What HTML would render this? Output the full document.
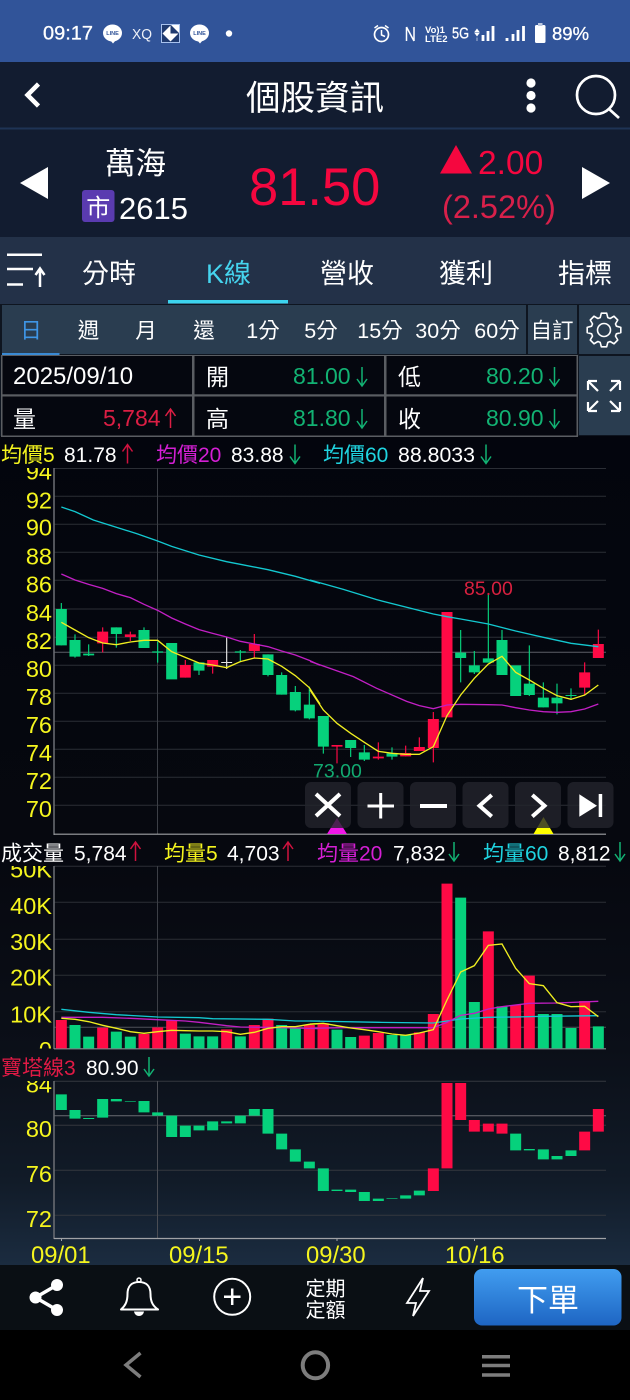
<!DOCTYPE html>
<html><head><meta charset="utf-8"><style>
html,body{margin:0;padding:0;background:#000;width:630px;height:1400px;overflow:hidden}
svg{display:block}
text{font-family:"Liberation Sans","Noto Sans CJK TC",sans-serif;fill:#fff}
.y text{fill:#f5f51e}
.g{fill:#12b273}.r{fill:#f0103f}
</style></head><body>
<svg width="630" height="1400" viewBox="0 0 630 1400" xmlns="http://www.w3.org/2000/svg">
<defs>
<linearGradient id="bg" x1="0" y1="0" x2="0" y2="1"><stop offset="0" stop-color="#03050d"/><stop offset=".5" stop-color="#06080f"/><stop offset=".74" stop-color="#0b0f18"/><stop offset=".9" stop-color="#111b28"/><stop offset="1" stop-color="#1b2c40"/></linearGradient>
<linearGradient id="btn" x1="0" y1="0" x2="0" y2="1"><stop offset="0" stop-color="#419df0"/><stop offset="1" stop-color="#1e65c3"/></linearGradient>
<clipPath id="c1"><rect x="0" y="468" width="54" height="370"/></clipPath>
<clipPath id="c2"><rect x="0" y="866" width="54" height="182.500"/></clipPath>
<clipPath id="c3"><rect x="0" y="1081" width="54" height="157"/></clipPath>
<path id="dn" fill="none" stroke-width="1.500" d="M0 -19V0M-5 -7L0 0L5 -7"/>
<path id="up" fill="none" stroke-width="1.500" d="M0 0V-19M-5 -12L0 -19L5 -12"/>
</defs>

<!-- base -->
<rect width="630" height="1400" fill="#000"/>
<rect width="630" height="62" fill="#315499"/>
<rect y="62" width="630" height="175" fill="#121c30"/>
<rect y="127.500" width="630" height="2" fill="#1e3355"/>
<rect y="237" width="630" height="67" fill="#233148"/>
<rect y="304" width="630" height="132" fill="#0e1520"/>
<rect y="436" width="630" height="829" fill="url(#bg)"/>

<!-- status bar -->
<text x="43" y="39.500" font-size="19.500" textLength="50" lengthAdjust="spacingAndGlyphs" stroke="#fff" stroke-width=".3">09:17</text>
<g>
<ellipse cx="112.500" cy="33" rx="9.500" ry="8.500" fill="#fff"/><path d="M110 40l3 3.500l3-3.500z" fill="#fff"/>
<text x="112.500" y="35" font-size="5.500" font-weight="bold" text-anchor="middle" style="fill:#315499">LINE</text>
<text x="132" y="39" font-size="14.500" textLength="20" lengthAdjust="spacingAndGlyphs" style="fill:#eef1f8">XQ</text>
<rect x="161.500" y="24.500" width="18" height="18" fill="#1f3a70" stroke="#a8c2ee" stroke-width="1"/>
<path d="M162.500 33.500L170.500 25.500V41.500ZM170.500 41.500L178.500 33.500H170.500ZM171 25H179V33Z" fill="#fff"/>
<ellipse cx="199.500" cy="33" rx="9.500" ry="8.500" fill="#fff"/><path d="M197 40l3 3.500l3-3.500z" fill="#fff"/>
<text x="199.500" y="35" font-size="5.500" font-weight="bold" text-anchor="middle" style="fill:#315499">LINE</text>
<circle cx="229" cy="33.500" r="3.200" fill="#fff"/>
<circle cx="381.500" cy="34.500" r="7" fill="none" stroke="#fff" stroke-width="1.700"/>
<path d="M381.500 30V35L385 36.500M374.500 28L378 25.500M388.500 28L385 25.500" fill="none" stroke="#fff" stroke-width="1.500"/>
<path d="M406.500 27V41M414 27V41M406.500 27L414 41" fill="none" stroke="#fff" stroke-width="1.500"/>
<text x="425" y="33" font-size="9.500" font-weight="bold">Vo)1</text>
<text x="425" y="42" font-size="9.500" font-weight="bold">LTE2</text>
<text x="452" y="38.500" font-size="16" textLength="17" lengthAdjust="spacingAndGlyphs" stroke="#fff" stroke-width=".3">5G</text>
<path d="M477 29l-2.200 3h4.400zM477 36l-2.200-3h4.400zM477 41V37.500" fill="#fff" stroke="#fff" stroke-width=".6"/>
<path d="M483 41V35M488 41V31M493 41V26" stroke="#fff" stroke-width="2.800"/>
<path d="M507 41V38M513 41V34M518 41V30M523.500 41V26" stroke="#fff" stroke-width="2.800"/>
<rect x="535" y="25" width="10.500" height="18" rx="1.500" fill="#fff"/><rect x="538" y="23" width="4.500" height="3" fill="#bcc8df"/>
<text x="552" y="40" font-size="18.500" stroke="#fff" stroke-width=".3">89%</text>
</g>

<!-- header -->
<path d="M38.500 84L27.500 95L38.500 106" fill="none" stroke="#fff" stroke-width="4.500"/>
<text x="246" y="110" font-size="34.500">個股資訊</text>
<circle cx="531" cy="83" r="4.600" fill="#fff"/><circle cx="531" cy="95.500" r="4.600" fill="#fff"/><circle cx="531" cy="108" r="4.600" fill="#fff"/>
<circle cx="596" cy="95" r="19" fill="none" stroke="#fff" stroke-width="2.700"/><path d="M609 109L619 118" stroke="#fff" stroke-width="2.700"/>

<!-- stock row -->
<path d="M48 167V199L20 183Z" fill="#fff"/>
<path d="M582 167V199L610 183Z" fill="#fff"/>
<text x="105" y="174" font-size="30.500">萬海</text>
<rect x="82" y="190" width="32.500" height="32" rx="3" fill="#5a3bb0"/>
<text x="98.300" y="216" font-size="24" text-anchor="middle">市</text>
<text x="119" y="219" font-size="31">2615</text>
<text x="249" y="205" font-size="52.500" class="r" style="fill:#f5073f">81.50</text>
<path d="M440 173.500L456 145L472 173.500Z" fill="#f5073f"/>
<text x="478" y="174" font-size="33.500" style="fill:#f5073f">2.00</text>
<text x="442" y="218" font-size="32.500" style="fill:#d8204a">(2.52%)</text>

<!-- tabs -->
<path d="M7 254.800H42M7 269H33M7 284.500H23" stroke="#fff" stroke-width="2.500"/>
<path d="M40 287V270M35.500 275L40 268.500L44.500 275" fill="none" stroke="#fff" stroke-width="2.500"/>
<g font-size="27">
<text x="82" y="283">分時</text>
<text x="206" y="283" style="fill:#45d4ee">K線</text>
<text x="320" y="283">營收</text>
<text x="439" y="283">獲利</text>
<text x="558" y="283">指標</text>
</g>
<rect x="168" y="300" width="120" height="3.500" fill="#3cd4ee"/>

<!-- period row -->
<rect x="2" y="305" width="524" height="49" fill="#2a3d50"/>
<rect x="528" y="305" width="49" height="49" fill="#2a3d50"/>
<rect x="579" y="305" width="51" height="49" fill="#2a3d50"/>
<rect x="2" y="353" width="57.500" height="2.500" fill="#3a8ad4"/>
<g font-size="21.500" text-anchor="middle">
<text x="31" y="338" style="fill:#3f96e6">日</text>
<text x="88.500" y="338">週</text>
<text x="146" y="338">月</text>
<text x="204" y="338">還</text>
<text x="263" y="338">1分</text>
<text x="321" y="338">5分</text>
<text x="380" y="338">15分</text>
<text x="438" y="338">30分</text>
<text x="497" y="338">60分</text>
<text x="552" y="338">自訂</text>
</g>
<g transform="translate(604,330)" fill="none" stroke="#fff" stroke-width="1.600" stroke-linejoin="round">
<path d="M3.800 -12.400L2.660 -16.800L-2.660 -16.800L-3.800 -12.400L-6.100 -11.500L-10 -13.750L-13.750 -10L-11.500 -6.100L-12.400 -3.800L-16.800 -2.660L-16.800 2.660L-12.400 3.800L-11.500 6.100L-13.750 10L-10 13.750L-6.100 11.500L-3.800 12.400L-2.660 16.800L2.660 16.800L3.800 12.400L6.100 11.500L10 13.750L13.750 10L11.500 6.100L12.400 3.800L16.800 2.660L16.800 -2.660L12.400 -3.800L11.500 -6.100L13.750 -10L10 -13.750L6.100 -11.500Z"/>
<circle r="6.500"/>
</g>

<!-- table -->
<rect x="1" y="355" width="577" height="82" fill="#5a5d62"/>
<g fill="#05070f">
<rect x="2.500" y="356" width="189.500" height="38.300"/><rect x="194.500" y="356" width="189.500" height="38.300"/><rect x="386.500" y="356" width="190" height="38.300"/>
<rect x="2.500" y="396.500" width="189.500" height="39"/><rect x="194.500" y="396.500" width="189.500" height="39"/><rect x="386.500" y="396.500" width="190" height="39"/>
</g>
<g font-size="23">
<text x="13" y="384" font-size="24">2025/09/10</text>
<text x="206" y="385">開</text><text x="293" y="384" class="g">81.00</text>
<text x="398" y="385">低</text><text x="486" y="384" class="g">80.20</text>
<text x="13" y="427">量</text><text x="103" y="426" class="r" style="fill:#dc1e44">5,784</text>
<text x="206" y="427">高</text><text x="293" y="426" class="g">81.80</text>
<text x="398" y="427">收</text><text x="486" y="426" class="g">80.90</text>
</g>
<use href="#dn" x="362" y="386" stroke="#12b273"/><use href="#dn" x="554.500" y="386" stroke="#12b273"/>
<use href="#up" x="170.500" y="428" stroke="#dc1e44"/><use href="#dn" x="362" y="428" stroke="#12b273"/><use href="#dn" x="554.500" y="428" stroke="#12b273"/>
<rect x="579" y="356" width="51" height="79" fill="#2a3d50"/>
<g fill="none" stroke="#fff" stroke-width="2.200">
<path d="M588 381H597M588 381V390M588 381L598 391"/>
<path d="M620 381H611M620 381V390M620 381L610 391"/>
<path d="M588 411H597M588 411V402M588 411L598 401"/>
<path d="M620 411H611M620 411V402M620 411L610 401"/>
</g>

<!-- legend 1 -->
<g font-size="21">
<text x="1" y="462" style="fill:#f5f51e">均價5</text><text x="64" y="462">81.78</text>
<text x="156" y="462" style="fill:#d41fd4">均價20</text><text x="231" y="462">83.88</text>
<text x="323" y="462" style="fill:#1fd4e0">均價60</text><text x="398" y="462" textLength="77" lengthAdjust="spacingAndGlyphs">88.8033</text>
</g>
<use href="#up" x="127.500" y="463.500" stroke="#d0123f"/><use href="#dn" x="295" y="463.500" stroke="#12b273"/><use href="#dn" x="486" y="463.500" stroke="#12b273"/>

<!-- grid pane 1 -->
<g stroke="#2b2e35" stroke-width="1">
<path d="M54 468.500H606M54 496.300H606M54 524.300H606M54 552.300H606M54 580.300H606M54 609H606M54 637.300H606M54 665.300H606M54 693.300H606M54 721.300H606M54 749.300H606M54 777.300H606M54 805.300H606"/>
</g>
<path d="M54 652.300H606" stroke="#5c5f66"/>
<path d="M157.500 468V834" stroke="#3c3f46"/>
<path d="M54 468V835" stroke="#6c6f75" stroke-width="1.500"/><path d="M54 834.200H606" stroke="#a0a2a6" stroke-width="1.200"/>

<!-- candles A -->
<g transform="translate(0,465) scale(.33333)" fill="none">
<path stroke="#06d17c" stroke-width="3.500" d="M184 414V541M225 508V578M266 538V573M349 487V548M432 487V549M473 530V593M597 592V630M721 555V590M804 568V634M845 622V689M886 663V739M928 665V763"/>
<path stroke="#06d17c" stroke-width="33" d="M184 432V541M225 525V575M266 566V571M349 487V507M432 495V549M473 559V563M515 534V643M597 592V617M721 559V563M804 568V630M845 630V689M886 681V736M928 719V760"/>
<path stroke="#ff0a45" stroke-width="3.500" d="M308 487V562M391 500V528M556 585V638M638 585V626M763 507V578"/>
<path stroke="#ff0a45" stroke-width="33" d="M308 500V535M391 508V516M556 600V638M638 585V605M763 537V558"/>
<path stroke="#e4e4e4" stroke-width="3.500" d="M680 517V612"/><path stroke="#e4e4e4" stroke-width="33" d="M680 591V594"/>
<path stroke="#13c8d0" stroke-width="4" d="M184 126L225 140L280 165L350 187L410 206L473 228L515 244L597 270L680 290L721 298L804 314L886 334L960 355"/>
<path stroke="#c21fc4" stroke-width="4" d="M184 327L225 345L266 358L308 370L349 386L391 398L432 418L473 436L515 459L556 477L597 494L638 505L680 516L721 529L763 537L804 545L845 558L886 570L928 586L960 601"/>
<path stroke="#f0ee20" stroke-width="4" d="M184 472L225 495L266 518L308 534L349 539L391 531L432 526L473 526L515 560L556 577L597 594L638 600L680 608L721 590L763 579L804 582L845 604L886 632L928 668L960 717"/>
</g>
<!-- candles B -->
<g transform="translate(310,465) scale(.33333)" fill="none">
<path stroke="#06d17c" stroke-width="3.500" d="M40 753V866M122 825V876M163 840V888M246 847V884M452 495V652M493 558V627M535 390V593M576 495V630M658 541V693M700 652V727M741 656V748M783 670V705"/>
<path stroke="#06d17c" stroke-width="33" d="M40 753V845M122 825V849M163 862V884M246 865V875M452 563V579M493 601V622M535 580V593M576 525V630M617 601V693M658 656V690M700 698V727M741 698V715M783 690V693"/>
<path stroke="#ff0a45" stroke-width="3.500" d="M81 840V895M205 832V884M287 842V874M328 817V858M370 741V892M824 592V690M865 494V579"/>
<path stroke="#ff0a45" stroke-width="33" d="M81 840V845M205 875V880M287 864V874M328 846V858M370 762V849M411 441V757M824 622V668M865 537V579"/>
<path stroke="#13c8d0" stroke-width="4" d="M0 345L100 373L200 404L370 447L411 455L452 462L535 477L617 498L700 517L783 535L865 545"/>
<path stroke="#c21fc4" stroke-width="4" d="M0 589L60 610L130 635L200 670L290 709L328 722L370 731L411 720L452 718L535 719L576 720L617 728L658 735L700 740L741 742L783 740L824 732L865 717"/>
<path stroke="#f0ee20" stroke-width="4" d="M0 675L40 735L81 775L122 805L163 832L205 859L246 865L287 868L328 868L370 845L411 752L452 690L493 640L535 597L576 574L617 622L658 645L700 670L741 692L783 703L824 690L865 660"/>
</g>
<text x="313" y="777.300" font-size="19.500" style="fill:#12a970">73.00</text>
<text x="464" y="595" font-size="19.500" style="fill:#d8203f">85.00</text>

<!-- y labels 1 -->
<g class="y" font-size="23.500" text-anchor="end" clip-path="url(#c1)">
<text x="52" y="479.300">94</text><text x="52" y="508.300">92</text><text x="52" y="535.700">90</text><text x="52" y="564.300">88</text><text x="52" y="592.700">86</text><text x="52" y="621">84</text><text x="52" y="649">82</text><text x="52" y="677">80</text><text x="52" y="705">78</text><text x="52" y="733">76</text><text x="52" y="761">74</text><text x="52" y="789">72</text><text x="52" y="817">70</text>
</g>

<!-- markers & buttons -->
<path d="M327 834L337 818L347 834Z" fill="#f018e8"/>
<path d="M533.500 834L543.500 817L553.500 834Z" fill="#ffff00"/>
<g fill="#23242c" fill-opacity=".8">
<rect x="305" y="782" width="46" height="46" rx="6"/><rect x="357.500" y="782" width="46" height="46" rx="6"/><rect x="410" y="782" width="46" height="46" rx="6"/><rect x="462.500" y="782" width="46" height="46" rx="6"/><rect x="515" y="782" width="46" height="46" rx="6"/><rect x="567.500" y="782" width="46" height="46" rx="6"/>
</g>
<g fill="none" stroke="#fff">
<path d="M316 794L340 816M340 794L316 816" stroke-width="4"/>
<path d="M367.500 806H394M380.700 793V818.500" stroke-width="3"/>
<path d="M420 806H447" stroke-width="4"/>
<path d="M491.700 795L479.500 805.700L491.700 816.500" stroke-width="4"/>
<path d="M532.300 795L544.500 805.700L532.300 816.500" stroke-width="4"/>
</g>
<path d="M579.300 794.300L597 805.700L579.300 816.700Z" fill="#fff"/><rect x="598.700" y="794" width="3.500" height="23" fill="#fff"/>

<!-- legend 2 -->
<g font-size="21">
<text x="1" y="860.300">成交量</text><text x="74" y="860.300">5,784</text>
<text x="164" y="860.300" style="fill:#f5f51e">均量5</text><text x="227" y="860.300">4,703</text>
<text x="317" y="860.300" style="fill:#d41fd4">均量20</text><text x="393" y="860.300">7,832</text>
<text x="483" y="860.300" style="fill:#1fd4e0">均量60</text><text x="558" y="860.300">8,812</text>
</g>
<use href="#up" x="135.500" y="861" stroke="#d0123f"/><use href="#up" x="288" y="861" stroke="#d0123f"/><use href="#dn" x="454" y="861" stroke="#12b273"/><use href="#dn" x="620" y="861" stroke="#12b273"/>

<!-- pane 2 -->
<g stroke="#2b2e35"><path d="M54 866.300H606M54 902.300H606M54 939.300H606M54 975.300H606M54 1011.700H606"/></g>
<path d="M54 1027.300H606" stroke="#4e5158"/>
<path d="M157.500 866V1048" stroke="#3c3f46"/>
<path d="M54 866V1049" stroke="#6c6f75" stroke-width="1.500"/><path d="M54 1048.800H606" stroke="#8c8e92" stroke-width="1.200"/>
<g transform="translate(0,835) scale(.33333)" fill="none">
<path stroke="#ff0a45" stroke-width="33" d="M184 555V640M308 578V640M432 597V640M473 577V640M515 555V640M680 583V640M763 570V640M804 551V640M928 570V640"/>
<path stroke="#06d17c" stroke-width="33" d="M225 570V640M266 605V640M349 590V640M391 605V640M556 596V640M597 604V640M638 604V640M721 604V640M845 570V640M886 578V640"/>
<path stroke="#ff0a45" stroke-width="33" d="M969 565V640"/>
<path stroke="#13c8d0" stroke-width="4" d="M184 523L266 532L349 539L473 546L597 548L638 551L804 553L886 558L960 558"/>
<path stroke="#c21fc4" stroke-width="4" d="M184 547L225 547L308 547L391 550L473 554L556 558L597 562L680 572L721 576L804 577L886 579L960 581"/>
<path stroke="#f0ee20" stroke-width="4" d="M184 550L225 553L266 560L308 571L349 580L391 590L432 595L473 590L515 586L556 587L597 588L638 588L680 590L721 598L763 592L804 580L845 575L886 575L928 568L960 566"/>
</g>
<g transform="translate(310,835) scale(.33333)" fill="none">
<path stroke="#ff0a45" stroke-width="33" d="M40 565V640M163 602V640M205 594V640M328 592V640M370 537V640M411 146V640M535 289V640M617 510V640M658 422V640M824 498V640"/>
<path stroke="#06d17c" stroke-width="33" d="M81 584V640M122 606V640M246 600V640M287 600V640M452 188V640M493 501V640M576 514V640M700 537V640M741 537V640M783 579V640M865 574V640"/>
<path stroke="#13c8d0" stroke-width="4" d="M0 558L205 562L370 564L411 558L452 552L535 547L617 546L700 544L865 542"/>
<path stroke="#c21fc4" stroke-width="4" d="M0 580L100 578L205 578L370 578L411 562L452 541L493 535L535 522L576 515L658 505L741 504L865 499"/>
<path stroke="#f0ee20" stroke-width="4" d="M0 567L40 565L81 572L122 579L163 584L205 590L246 597L287 601L328 594L370 584L411 495L452 411L493 392L535 331L576 327L617 400L658 446L700 452L741 503L783 515L824 514L865 545"/>
</g>
<g class="y" font-size="23.500" text-anchor="end" clip-path="url(#c2)">
<text x="52" y="877.700">50K</text><text x="52" y="914">40K</text><text x="52" y="950">30K</text><text x="52" y="985.700">20K</text><text x="52" y="1022.700">10K</text><text x="52" y="1058">0</text>
</g>

<!-- legend 3 -->
<g font-size="21">
<text x="1" y="1075" style="fill:#e01a45">寶塔線3</text><text x="86" y="1075">80.90</text>
</g>
<use href="#dn" x="149" y="1076" stroke="#12b273"/>

<!-- pane 3 -->
<g stroke="#34373e"><path d="M54 1081.300H606M54 1125.300H606M54 1170.300H606M54 1215.300H606"/></g>
<path d="M54 1115.700H606" stroke="#6a6d73"/>
<path d="M157.500 1081V1238" stroke="#4a4d54"/>
<path d="M54 1081V1239" stroke="#6c6f75" stroke-width="1.500"/><path d="M54 1238.500H606" stroke="#a0a2a6" stroke-width="1.200"/>
<path d="M61.500 1238V1241M199.500 1238V1241M337 1238V1241M474.500 1238V1241" stroke="#a0a2a6"/>
<g transform="translate(0,1050) scale(.33333)" fill="none">
<path stroke="#06d17c" stroke-width="33" d="M184 133V180M225 180V206M266 204V207M308 147V203M349 147V154M391 153V155M432 153V187M473 187V197M515 197V261M556 227V261M597 227V241M638 214V241M680 214V220M721 197V220M763 177V197M804 177V251M845 251V298M886 298V335M928 335V355"/>
</g>
<g transform="translate(310,1050) scale(.33333)" fill="none">
<path stroke="#06d17c" stroke-width="33" d="M40 355V423M81 419V423M122 419V426M163 426V453M205 446V453M246 444V446M287 436V446M328 422V436M617 251V301M658 297V301M700 298V328M741 318V328M783 301V318"/>
<path stroke="#ff0a45" stroke-width="33" d="M370 355V423M411 99V355M452 99V210M493 210V245M535 221V245M576 221V251M824 245V301M865 177V245"/>
</g>
<g class="y" font-size="23.500" text-anchor="end" clip-path="url(#c3)">
<text x="52" y="1092.700">84</text><text x="52" y="1137">80</text><text x="52" y="1182">76</text><text x="52" y="1227">72</text>
</g>
<g class="y" font-size="23.800">
<text x="31" y="1263">09/01</text><text x="169" y="1263">09/15</text><text x="306" y="1263">09/30</text><text x="445" y="1263">10/16</text>
</g>

<!-- bottom bar -->
<rect y="1265" width="630" height="65" fill="#0a0f14"/>
<path d="M57 1285L35.500 1297.500L57 1310" fill="none" stroke="#fff" stroke-width="3.500"/>
<circle cx="57" cy="1285" r="6" fill="#fff"/><circle cx="35.500" cy="1297.500" r="6" fill="#fff"/><circle cx="57" cy="1310" r="6" fill="#fff"/>
<path d="M121 1309.500C125 1306 127.500 1302 127.500 1294C127.500 1286 132 1282 139 1282C146 1282 150.500 1286 150.500 1294C150.500 1302 153 1306 158 1309.500Z" fill="none" stroke="#fff" stroke-width="2" stroke-linejoin="round"/>
<circle cx="139" cy="1280" r="2" fill="none" stroke="#fff" stroke-width="1.500"/>
<path d="M134 1311.500C135 1317.500 143 1317.500 144 1311.500Z" fill="#fff"/>
<circle cx="232.200" cy="1296.800" r="18" fill="none" stroke="#fff" stroke-width="2"/>
<path d="M224 1296.800H240.500M232.200 1288.500V1305" stroke="#fff" stroke-width="2.500"/>
<text x="305.500" y="1295.500" font-size="20">定期</text>
<text x="305.500" y="1317" font-size="20">定額</text>
<path d="M423 1278L407 1303H416L413 1316L429 1291H420Z" fill="none" stroke="#fff" stroke-width="1.800" stroke-linejoin="miter"/>
<rect x="474" y="1269" width="147.500" height="56.500" rx="8" fill="url(#btn)"/>
<text x="517" y="1311" font-size="31">下單</text>

<!-- nav -->
<path d="M140.500 1353L126 1365L140.500 1377" fill="none" stroke="#7d7d7d" stroke-width="3.500"/>
<ellipse cx="315.400" cy="1365.300" rx="12.700" ry="13" fill="none" stroke="#7d7d7d" stroke-width="4"/>
<path d="M482 1356.800H510M482 1365.500H510M482 1375H510" stroke="#7d7d7d" stroke-width="3.500"/>
</svg>
</body></html>
